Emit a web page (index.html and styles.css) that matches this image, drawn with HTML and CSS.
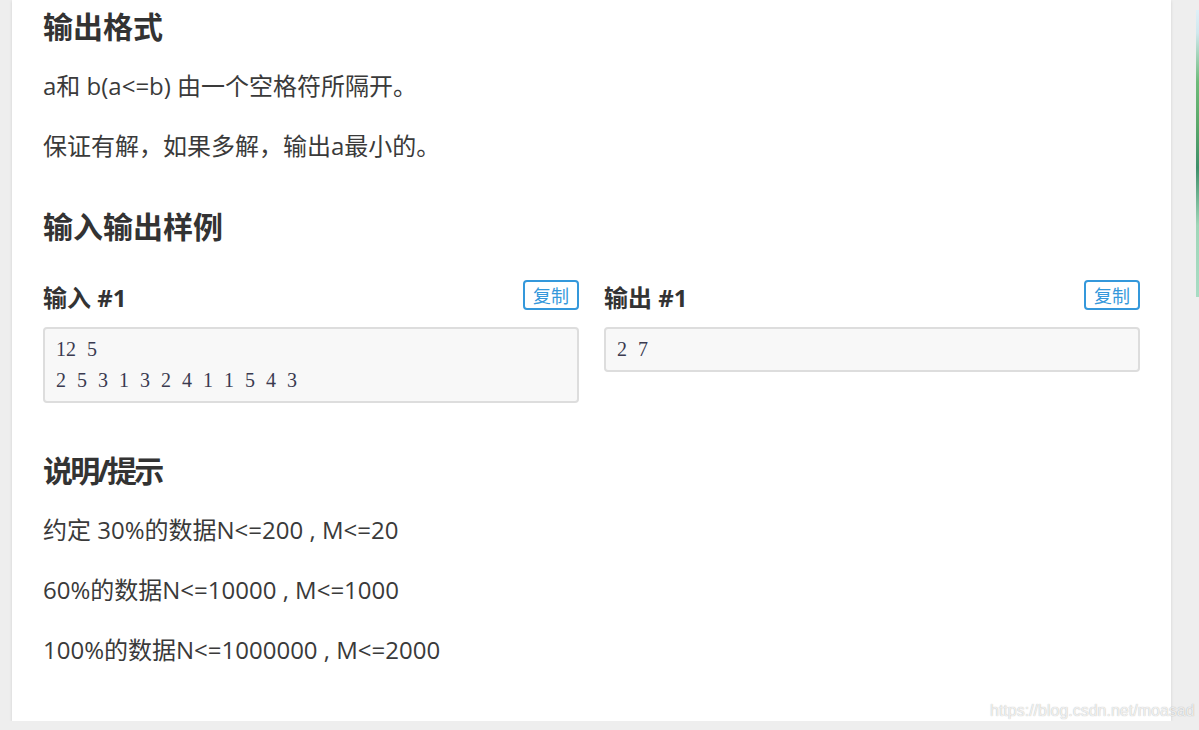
FILE: index.html
```html
<!DOCTYPE html>
<html>
<head>
  <title>输出格式</title>
  <meta charset="UTF-8">
  <meta name="viewport" content="width=device-width, initial-scale=1.0">
  <link rel="stylesheet" href="styles.css">
</head>
<body>
  <div class="card">
    <h2>输出格式</h2>
    <p>a和 b(a&lt;=b) 由一个空格符所隔开。</p>
    <p>保证有解，如果多解，输出a最小的。</p>

    <h2 class="gap">输入输出样例</h2>
    <div class="samples">
      <div class="sample">
        <div class="sample-head">
          <h3>输入 #1</h3>
          <button class="copy">复制</button>
        </div>
        <pre class="code">12 5
2 5 3 1 3 2 4 1 1 5 4 3</pre>
      </div>
      <div class="sample">
        <div class="sample-head">
          <h3>输出 #1</h3>
          <button class="copy">复制</button>
        </div>
        <pre class="code">2 7</pre>
      </div>
    </div>

    <h2 class="gap2">说明/提示</h2>
    <p>约定 30%的数据N&lt;=200 , M&lt;=20</p>
    <p>60%的数据N&lt;=10000 , M&lt;=1000</p>
    <p>100%的数据N&lt;=1000000 , M&lt;=2000</p>
  </div>
  <div class="side"></div>
  <div class="watermark">https://blog.csdn.net/moasad</div>
</body>
</html>
```

FILE: styles.css
```css
body { margin: 0; background: #eeeeee; display: flex; align-items: flex-start; font-family: "Open Sans", "Noto Sans CJK SC", sans-serif; color: #333; }
.card { margin-left: 12px; width: 1159px; box-sizing: border-box; padding: 5px 31px 28px; background: #fff; box-shadow: 0 1px 3px rgba(0,0,0,0.12); }
h2 { font-size: 30px; line-height: 44px; font-weight: 700; margin: 0 0 20px; color: #333; }
h2.gap { margin-top: 43px; }
h2.gap2 { margin-top: 46px; letter-spacing: -2.8px; }
p { font-size: 24px; line-height: 33px; margin: 0 0 27px; color: #3a3a3a; }
.samples { display: grid; grid-template-columns: 1fr 1fr; gap: 25px; margin-top: 31px; align-items: start; }
.sample-head { display: flex; justify-content: space-between; align-items: center; height: 36px; margin-bottom: 11px; }
h3 { margin: 0; font-size: 24px; font-weight: 700; line-height: 36px; }
.copy { font-family: "Noto Sans CJK SC", sans-serif; font-size: 18px; line-height: 24px; padding: 1px 8px; background: #fff; color: #3498db; border: 2px solid #3498db; border-radius: 4px; margin-top: -7px; }
.code { margin: 0; background: #f8f8f8; border: 2px solid #ddd; border-radius: 4px; padding: 5px 11px; font-family: "Liberation Serif", serif; font-size: 20px; line-height: 31px; word-spacing: 6px; color: #3a3a50; }
.side { width: 3px; height: 287px; margin: 10px 0 0 25px; background: linear-gradient(#dff0f8 0%, #cfe8ee 8%, #6dbb7a 25%, #5aa86a 40%, #3e8f6a 55%, #9fd6b8 75%, #a8dcc4 100%); }
.watermark { position: absolute; left: 990px; top: 702px; font-family: "Liberation Sans", sans-serif; font-size: 16px; color: rgba(255,255,255,0.8); text-shadow: 0 0 1px rgba(0,0,0,0.35); }
```
